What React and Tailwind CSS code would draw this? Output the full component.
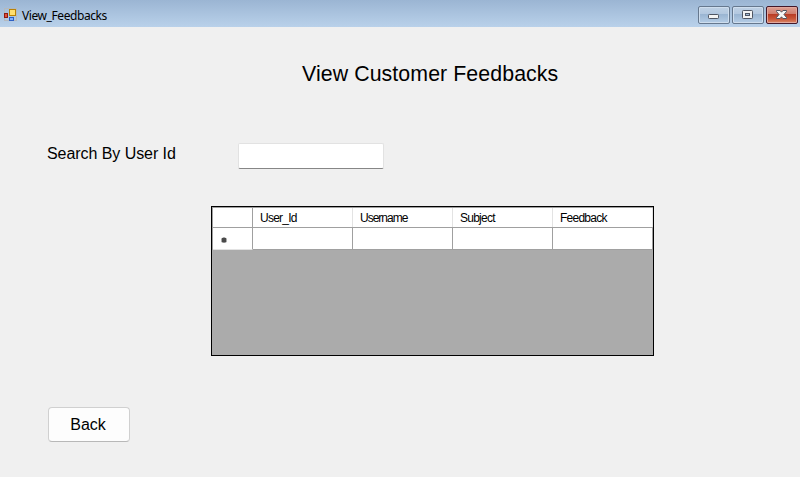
const COLUMNS = [
  { name: 'User_Id', tracking: 'tracking-[-0.75px]' },
  { name: 'Username', tracking: 'tracking-[-1px]' },
  { name: 'Subject', tracking: 'tracking-[-0.75px]' },
  { name: 'Feedback', tracking: 'tracking-[-0.75px]' },
];

function FormIcon() {
  return (
    <svg width="14" height="14" viewBox="0 0 14 14" shapeRendering="crispEdges">
      <rect x="0.5" y="0.5" width="12" height="12" fill="none" stroke="#b4b9be" />
      <rect x="0" y="5" width="4" height="5" fill="#8e1a12" />
      <rect x="1" y="6" width="2" height="3" fill="#e0503c" />
      <rect x="5" y="1" width="7" height="7" fill="#b98205" />
      <rect x="6" y="2" width="5" height="5" fill="#ffdf70" />
      <rect x="5" y="9" width="5" height="4" fill="#2c5fc4" />
      <rect x="6" y="10" width="3" height="2" fill="#7fb0ff" />
    </svg>
  );
}

function CaptionButton({ children, close }) {
  const tone = close
    ? 'border-[#43182a] bg-[linear-gradient(#dda095_0%,#cf7b6b_45%,#b93c25_46%,#c9573a_75%,#d98a6a_100%)] shadow-[inset_0_0_0_1px_#e3a89d]'
    : 'border-[#66788e] bg-[linear-gradient(#bfd1e5_0%,#b2c7df_45%,#9ab5d2_46%,#b5cde6_100%)] shadow-[inset_0_0_0_1px_#cfdeee]';
  return (
    <button className={'flex h-[18px] w-8 items-center justify-center rounded-[2px] border ' + tone}>
      {children}
    </button>
  );
}

function TitleBar() {
  return (
    <div className="flex h-[27px] items-start justify-between bg-[linear-gradient(#9bb5d3,#b9d1ea)] pr-[2px] pl-[4px]">
      <div className="flex items-start gap-[4px] pt-[8px]">
        <FormIcon />
        <span className="pt-px font-['Noto_Sans',sans-serif] text-[12px] leading-[14px] tracking-[-0.42px] whitespace-nowrap text-black">
          View_Feedbacks
        </span>
      </div>
      <div className="flex gap-[2px] pt-[6px]">
        <CaptionButton>
          <svg width="12" height="12" viewBox="0 0 12 12">
            <rect x="0.5" y="5.5" width="10" height="4" rx="0.8" fill="#f4f4f4" stroke="#4f5663" />
          </svg>
        </CaptionButton>
        <CaptionButton>
          <svg width="12" height="12" viewBox="0 0 12 12">
            <rect x="0.5" y="1.5" width="10" height="8" rx="0.8" fill="#f4f4f4" stroke="#4f5663" />
            <rect x="3.5" y="4.5" width="4" height="2" fill="#a5bdd8" stroke="#4f5663" />
          </svg>
        </CaptionButton>
        <CaptionButton close>
          <svg width="12" height="12" viewBox="0 0 12 12">
            <path
              d="M0.5 1.5H4.1L5.5 3.2L6.9 1.5H10.5V2.5L8 5.5L10.5 8.5V9.5H6.9L5.5 7.8L4.1 9.5H0.5V8.5L3 5.5L0.5 2.5Z"
              fill="#f6f6f6"
              stroke="#4f5360"
            />
          </svg>
        </CaptionButton>
      </div>
    </div>
  );
}

function FeedbackGrid() {
  return (
    <div className="ml-[211px] h-[150px] w-[443px] border border-black bg-[#ababab]">
      <div className="border-t border-l border-[#a0a0a0]">
        <div className="flex h-5 w-[440px] border-b border-[#a0a0a0] bg-white font-['Liberation_Sans',Arial,sans-serif] text-[12px] leading-[20px] text-black">
          <div className="w-10 border-r border-[#a0a0a0]" />
          {COLUMNS.map(({ name, tracking }) => (
            <div key={name} className={'w-[100px] border-r border-[#e3e3e3] pl-[7px] ' + tracking}>
              {name}
            </div>
          ))}
        </div>
        <div className="flex h-[22px] w-[440px] bg-white">
          <div className="flex w-10 items-center border-r border-b border-r-[#a0a0a0] border-b-[#e3e3e3] pt-[3px] pl-[8px]">
            <svg width="7" height="7" viewBox="0 0 7 7">
              <rect x="0.3" y="0.8" width="5.4" height="4.9" rx="1.4" fill="#8a8a8a" />
              <path d="M3 0V6" stroke="#777" />
              <rect x="1" y="1" width="4" height="4" fill="#4a4a4a" />
            </svg>
          </div>
          {COLUMNS.map(({ name }) => (
            <div key={name} className="w-[100px] border-r border-b border-[#a0a0a0]" />
          ))}
        </div>
      </div>
    </div>
  );
}

export default function App() {
  return (
    <div className="h-[477px] w-[800px] overflow-hidden bg-[#f0f0f0] font-['Liberation_Sans',Arial,sans-serif] text-black">
      <TitleBar />
      <h1 className="mt-[35px] ml-[302px] h-6 text-[21.33px] leading-6 tracking-[0.08px] whitespace-nowrap">
        View Customer Feedbacks
      </h1>
      <div className="mt-[57px] ml-[47px] flex h-[26px]">
        <label htmlFor="user-id" className="w-[191px] pt-px text-[16px] leading-5 tracking-[-0.06px] whitespace-nowrap">
          Search By User Id
        </label>
        <input
          id="user-id"
          className="h-[26px] w-[146px] rounded-[2px] border border-[#e2e2e2] border-b-[#868686] bg-white px-1 text-[16px] outline-none"
        />
      </div>
      <div className="mt-[37px]">
        <FeedbackGrid />
      </div>
      <button className="mt-[51px] ml-[48px] h-[35px] w-[82px] rounded-[4px] border border-[#d0d0d0] border-b-[#b8b8b8] bg-[#fdfdfd] pr-[2px] text-[16px] leading-[33px]">
        Back
      </button>
    </div>
  );
}
